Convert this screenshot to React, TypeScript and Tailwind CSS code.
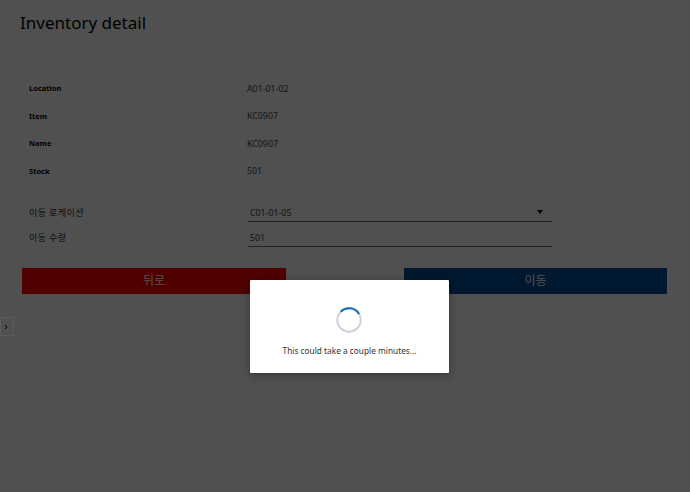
const details = [
  { label: 'Location', value: 'A01-01-02' },
  { label: 'Item', value: 'KC0907' },
  { label: 'Name', value: 'KC0907' },
  { label: 'Stock', value: '501' },
]

const fontStack = "font-['Noto_Sans','Noto_Sans_CJK_KR',sans-serif]"

export default function App() {
  return (
    <div className={`relative h-[492px] w-[690px] overflow-hidden bg-[#c8c8c8] text-[#1a1a1a] ${fontStack}`}>
      <div className="flex flex-col pl-5 pt-[9px]">
        <h1 className="h-[28px] text-[17px] font-normal leading-[28px] text-black">Inventory detail</h1>

        {/* Detail rows */}
        <div className="mt-[38px] flex flex-col pl-[9px]">
          {details.map((row) => (
            <div key={row.label} className="flex h-[27.6px] items-center">
              <span className="w-[218px] text-[7.5px] font-bold text-black">{row.label}</span>
              <span className="pt-[1px] text-[8.8px] text-[#333]">{row.value}</span>
            </div>
          ))}
        </div>

        {/* Move form */}
        <div className="mt-[17px] flex flex-col gap-[5px] pl-[9px]">
          <div className="flex h-[20px] items-center">
            <span className="w-[219px] text-[9px] tracking-[0.4px] text-[#222]">이동 로케이션</span>
            <div className="flex h-[20px] w-[304px] items-center justify-between border-b border-[#555] pl-[2px] pr-[9px] pt-[4px] text-[8.8px] text-[#333]">
              <span>C01-01-05</span>
              <span className="-mt-[3px] h-0 w-0 border-x-[3px] border-t-[4px] border-x-transparent border-t-black" />
            </div>
          </div>
          <div className="flex h-[20px] items-center">
            <span className="w-[219px] text-[9px] tracking-[0.4px] text-[#222]">이동 수량</span>
            <div className="flex h-[20px] w-[304px] items-center border-b border-[#555] pl-[2px] pt-[4px] text-[8.8px] text-[#333]">
              501
            </div>
          </div>
        </div>

        {/* Actions */}
        <div className="mt-[21px] flex w-[647px] justify-between self-start pl-[2px]">
          <button className="h-[26px] w-[264px] bg-[#c80000] text-[12px] text-[#cccccc]">뒤로</button>
          <button className="h-[26px] w-[263px] bg-[#003c78] text-[12px] text-[#cccccc]">이동</button>
        </div>

        <div className="-ml-5 mt-[23px] flex h-[19px] w-[14px] items-center border border-[#e0e0e0] pl-[2px]">
          <svg width="6" height="6" viewBox="0 0 6 6" fill="none" stroke="#000" strokeWidth="1">
            <path d="M2 1l2 2-2 2" />
          </svg>
        </div>
      </div>

      {/* Loading overlay */}
      <div className="absolute inset-0 bg-black/60">
        <div className="absolute left-[250px] top-[280px] flex h-[93px] w-[199px] flex-col items-center rounded-[1px] bg-white pt-[27px] shadow-[0_2px_8px_rgba(0,0,0,0.35)]">
          <svg className="mr-[1px]" width="26" height="26" viewBox="0 0 26 26" fill="none">
            <circle cx="13" cy="13" r="11.7" stroke="#c8d1dc" strokeWidth="2" />
            <path d="M4.7 4.7A11.7 11.7 0 0 1 23.1 7" stroke="#0f6cbd" strokeWidth="2" />
          </svg>
          <p className="mt-[11px] text-[8.3px] leading-[14px] text-[#333]">This could take a couple minutes...</p>
        </div>
      </div>
    </div>
  )
}
